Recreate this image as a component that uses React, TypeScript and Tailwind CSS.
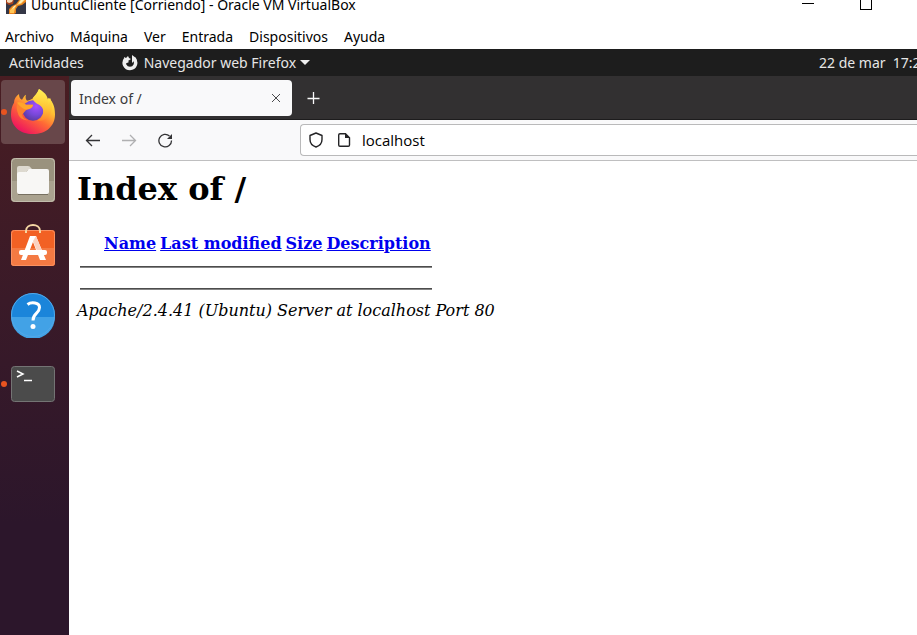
import React from "react";

const menus = ["Archivo", "Máquina", "Ver", "Entrada", "Dispositivos", "Ayuda"];
const columns = ["Name", "Last modified", "Size", "Description"];

function VirtualBoxIcon() {
  return (
    <svg width="20" height="14" viewBox="0 0 20 14" aria-hidden="true">
      <rect width="20" height="14" fill="#343746" />
      <path d="M0 0h8l-1 4-4 1-3-2z" fill="#a8431d" />
      <path d="M1 0h6l-1 2-3 1-2-1z" fill="#f4d9b8" />
      <path d="M13 0h7v2l-4 3-4 1-2 3v4l-2 1H3V9l3-3 4-2z" fill="#e8811c" />
      <path d="M14 0h5l-4 4-4 1-2 3-1 5H4v-3l3-3 4-2z" fill="#ffc657" />
      <path d="M15 0h3l-3 3-4 1-3 4-2 1 2-3 4-2z" fill="#fff0bd" />
    </svg>
  );
}

function FirefoxIcon() {
  return (
    <svg width="46" height="47" viewBox="0 0 46 48" preserveAspectRatio="none" className="-mt-px" aria-hidden="true">
      <defs>
        <linearGradient id="flame" x1="0.8" y1="0.1" x2="0.25" y2="0.95">
          <stop offset="0" stopColor="#fff04a" />
          <stop offset="0.3" stopColor="#ffbd32" />
          <stop offset="0.58" stopColor="#ff6a35" />
          <stop offset="1" stopColor="#ee145f" />
        </linearGradient>
        <radialGradient id="globe" cx="0.65" cy="0.3" r="0.75">
          <stop offset="0" stopColor="#a64fff" />
          <stop offset="0.55" stopColor="#7848d9" />
          <stop offset="1" stopColor="#5a3aa0" />
        </radialGradient>
        <linearGradient id="tail" x1="0.6" y1="0" x2="0.5" y2="1">
          <stop offset="0" stopColor="#fff456" />
          <stop offset="0.6" stopColor="#ffc334" />
          <stop offset="1" stopColor="#ff842f" />
        </linearGradient>
      </defs>
      <path d="M4 15c0-4 2-7 5-9 0 3 1 5 3 6 2-3 2-4 4-5-1 3 0 5 1 6 6-1 9-5 12-12 3 4 6 7 8 11l2-2c5 6 6 11 6 17 0 12-9 20-22 20S1 39 1 27c0-5 1-9 3-12z" fill="url(#flame)" />
      <circle cx="23" cy="23" r="10.500" fill="url(#globe)" />
      <path d="M29 1c7 4 10 9 9 16 2-2 2-4 2-7 4 9 2 18-5 22-3 2-6 2-8 1 5-2 7-6 6-11-1-3-3-5-6-6-3-2-4-3-4-6 2-3 5-5 6-9z" fill="url(#tail)" />
      <path d="M7 16c3-1 6-1 9 1h7c0 3-3 4-6 5-3 2-3 4-5 5 1 4 3 5 6 6-5 0-9-3-10-7-1-3-2-6-1-10z" fill="#ff812e" />
      <path d="M7 15c3-1 6 0 9 2h7c0 3-3 4-6 5-3 0-6-2-10-7z" fill="#ffa42c" />
    </svg>
  );
}

function FilesIcon() {
  return (
    <svg width="46" height="46" viewBox="0 0 46 46" aria-hidden="true">
      <rect x="1" y="1" width="44" height="44" rx="4" fill="#9a927e" />
      <path d="M1 24h44v17a4 4 0 0 1-4 4H5a4 4 0 0 1-4-4z" fill="#aaa28f" />
      <rect x="1.500" y="1.500" width="43" height="43" rx="4" fill="none" stroke="#c3bdad" />
      <path d="M7 11q0-2 2-2h9q2 0 3 2l2 2h-5l-4 4H7z" fill="#ddd9cf" />
      <path d="M7 17q0-2 2-2h6q2 0 3-2l1-1h18q2 0 2 2v21q0 2-2 2H9q-2 0-2-2z" fill="#f8f7f5" />
      <path d="M8 37.500h30" stroke="#777061" />
    </svg>
  );
}

function SoftwareIcon() {
  return (
    <svg width="46" height="44" viewBox="0 0 46 44" aria-hidden="true">
      <rect x="1" y="7" width="44" height="36" rx="3" fill="#f26124" />
      <path d="M1 25h44v15a3 3 0 0 1-3 3H4a3 3 0 0 1-3-3z" fill="#f47a43" />
      <rect x="1.500" y="7.500" width="43" height="35" rx="3" fill="none" stroke="#fa9161" />
      <path d="M16 10V8c0-8 14-8 14 0v2" fill="none" stroke="#f5d7a4" strokeWidth="2" />
      <path d="M20 13h6l10 24h-6l-7-18-7 18h-5z" fill="#fff" />
      <path d="M26 13l6 15h-5l-4-10z" fill="#fbd2c0" />
      <rect x="9" y="27" width="28" height="5" rx="2" fill="#fff" />
    </svg>
  );
}

function HelpIcon() {
  return (
    <svg width="46" height="46" viewBox="0 0 46 46" aria-hidden="true">
      <circle cx="23" cy="23" r="22" fill="#1b85da" />
      <path d="M1 25h44a22 22 0 0 1-44 0z" fill="#42a2e6" />
      <circle cx="23" cy="23" r="21.500" fill="none" stroke="#52a8e8" />
      <path d="M17.500 12.500c4-3 12-2 12 3 0 6-7 6-6.500 13" fill="none" stroke="#fff" strokeWidth="3" />
      <circle cx="23" cy="34.500" r="2.500" fill="#fff" />
    </svg>
  );
}

function TerminalIcon() {
  return (
    <svg width="46" height="38" viewBox="0 0 46 38" aria-hidden="true">
      <rect x="1.500" y="1.500" width="43" height="35" rx="3" fill="#4b4b4b" stroke="#747474" />
      <path d="M7 6l6 3-6 3" fill="none" stroke="#fff" strokeWidth="1.500" />
      <path d="M14 15.500h8" stroke="#fff" strokeWidth="1.500" />
    </svg>
  );
}

function Dock() {
  const dot = "absolute left-px top-1/2 size-[6px] -translate-y-1/2 rounded-full bg-[#e95420]";
  const item = "relative flex w-full justify-center";
  return (
    <nav aria-label="Dock" className="flex w-[69px] shrink-0 flex-col items-start bg-linear-to-b from-[#491d22] via-[#3a1a28] via-40% to-[#2c162b] to-80% pt-1">
      <div className="relative w-full">
        <button aria-label="Firefox" className="ml-px flex h-16 w-16 items-center justify-center rounded-[4px] bg-[#68474a]"><FirefoxIcon /></button>
        <span className={dot} />
      </div>
      <div className="flex w-[66px] flex-col">
        <button aria-label="Archivos" className={item + " mt-[13px]"}><FilesIcon /></button>
        <button aria-label="Software" className={item + " mt-5"}><SoftwareIcon /></button>
        <button aria-label="Ayuda" className={item + " mt-[25px]"}><HelpIcon /></button>
        <button aria-label="Terminal" className={item + " mt-[27px]"}><TerminalIcon /><span className={dot} /></button>
      </div>
    </nav>
  );
}

function BrowserBar() {
  return (
    <header>
      <div className="flex h-11 items-center border-b border-[#1d1c1d] bg-[#323031] pl-[2px] text-[14px]">
        <div className="flex h-9 w-[221px] items-center justify-between rounded-[4px] bg-[#f9f9fa] px-2 text-[#3b3b3d]">
          <button className="pt-px">Index of /</button>
          <button aria-label="Cerrar pestaña" className="mr-px">
            <svg width="14" height="14" viewBox="0 0 14 14" aria-hidden="true"><path d="M3 3l8 8M11 3l-8 8" stroke="#4a4a4c" /></svg>
          </button>
        </div>
        <button aria-label="Nueva pestaña" className="ml-[14px] p-px">
          <svg width="14" height="14" viewBox="0 0 14 14" aria-hidden="true"><path d="M6.500 1v12M0.500 7.500h12" stroke="#f9f9fa" strokeWidth="1.300" /></svg>
        </button>
      </div>
      <div className="flex h-[41px] items-center border-b border-[#bfbfc0] bg-[#f9f9fa] pl-4">
        <div className="flex w-[215px] shrink-0 gap-5">
          <button aria-label="Atrás">
            <svg width="16" height="16" viewBox="0 0 16 16" fill="none" stroke="#333335" strokeWidth="1.300" aria-hidden="true"><path d="M15 8.500H1.500M7 3L1.500 8.500 7 14" /></svg>
          </button>
          <button aria-label="Adelante">
            <svg width="16" height="16" viewBox="0 0 16 16" fill="none" stroke="#b0b0b1" strokeWidth="1.300" aria-hidden="true"><path d="M1 8.500h13.500M9 3L14.500 8.500 9 14" /></svg>
          </button>
          <button aria-label="Recargar">
            <svg width="16" height="16" viewBox="0 0 16 16" fill="none" aria-hidden="true"><path d="M12.500 4a6.300 6.300 0 1 0 2 4.500" stroke="#333335" strokeWidth="1.300" /><path d="M15 2v5h-5z" fill="#333335" /></svg>
          </button>
        </div>
        <div className="flex h-8 min-w-0 flex-1 items-center rounded-l-[4px] border border-r-0 border-[#b9b9ba] bg-white pl-2">
          <svg width="14" height="16" viewBox="0 0 14 16" fill="none" stroke="#242426" strokeWidth="1.400" aria-hidden="true"><path d="M7 1l6 2.500v4c0 4-3 6.500-6 7.500-3-1-6-3.500-6-7.500v-4z" strokeLinejoin="round" /></svg>
          <svg className="ml-[14px]" width="14" height="16" viewBox="0 0 14 16" fill="none" aria-hidden="true"><path d="M3 1.700h5.500l4 4V13q0 1.300-1.300 1.300H3Q1.700 14.300 1.700 13V3Q1.700 1.700 3 1.700z" stroke="#242426" strokeWidth="1.400" /><path d="M8 1v5h5z" fill="#242426" /></svg>
          <input aria-label="Dirección" defaultValue="localhost" className="ml-[11px] min-w-0 flex-1 bg-transparent font-['Open_Sans',sans-serif] text-[15px] text-black outline-none" />
        </div>
      </div>
    </header>
  );
}

function DirectoryPage() {
  return (
    <main className="flex-1 bg-white px-2 pt-[9px] font-['DejaVu_Serif',serif] text-[16px] leading-[19px] text-black">
      <h1 className="text-[32px] leading-[38px] font-bold">Index of /</h1>
      <table className="mt-[22px] ml-px border-separate border-spacing-[2px]">
        <thead>
          <tr className="h-[23px]">
            <th className="p-0"><span className="block w-[21px]" /></th>
            {columns.map((name) => (
              <th key={name} className="px-px pt-[2px] text-left align-top font-bold whitespace-nowrap">
                <a href="#" className="text-[#0000ee] underline">{name}</a>
              </th>
            ))}
          </tr>
        </thead>
        <tbody>
          {[0, 1].map((line) => (
            <tr key={line}>
              <td colSpan={5} className="px-0 py-[9px]"><hr className="h-[2px] border-t border-b border-t-[#4c4c4c] border-b-[#858585]" /></td>
            </tr>
          ))}
        </tbody>
      </table>
      <address className="italic">Apache/2.4.41 (Ubuntu) Server at localhost Port 80</address>
    </main>
  );
}

export default function App() {
  return (
    <div className="flex min-h-screen flex-col overflow-hidden bg-white font-['Noto_Sans',sans-serif]">
      <div className="flex h-6 items-start pl-[6px] text-[14px] leading-5 text-black">
        <VirtualBoxIcon />
        <span className="-mt-[5px] ml-[5px]">UbuntuCliente [Corriendo] - Oracle VM VirtualBox</span>
        <div className="ml-auto flex items-start pr-[45px]">
          <button aria-label="Minimizar" className="mt-[3px] h-px w-3 bg-black" />
          <button aria-label="Maximizar" className="ml-[46px] h-[10px] w-3 border border-t-0 border-black" />
        </div>
      </div>
      <div role="menubar" className="flex h-[25px] items-center gap-4 pl-[5px] text-[14px] text-black">
        {menus.map((name) => <button role="menuitem" key={name}>{name}</button>)}
      </div>
      <div className="flex h-[27px] items-center bg-[#1d1d1d] pl-[9px] text-[14px] whitespace-nowrap text-[#e6e6e6]">
        <button>Actividades</button>
        <button className="ml-[38px] flex items-center">
          <svg width="16" height="16" viewBox="0 0 16 16" aria-hidden="true">
            <path d="M3.500 4C.5 8 3 13.500 8 13.500S15.500 8 12 3.500" fill="none" stroke="#efefef" strokeWidth="3.500" />
            <path d="M2 2l2 1 2-2 1 2 2 1-3 2 1 1-4 2zM10 0l4 3 1 4-3-1-2 2z" fill="#efefef" />
          </svg>
          <span className="ml-[6px]">Navegador web Firefox</span>
          <svg className="ml-1" width="10" height="6" viewBox="0 0 10 6" aria-hidden="true"><path d="M0 0h10L5 5z" fill="#efefef" /></svg>
        </button>
        <button className="ml-auto w-[98px] overflow-hidden text-left whitespace-pre">22 de mar  17:22</button>
      </div>
      <div className="flex flex-1">
        <Dock />
        <div className="flex min-w-0 flex-1 flex-col">
          <BrowserBar />
          <DirectoryPage />
        </div>
      </div>
    </div>
  );
}
